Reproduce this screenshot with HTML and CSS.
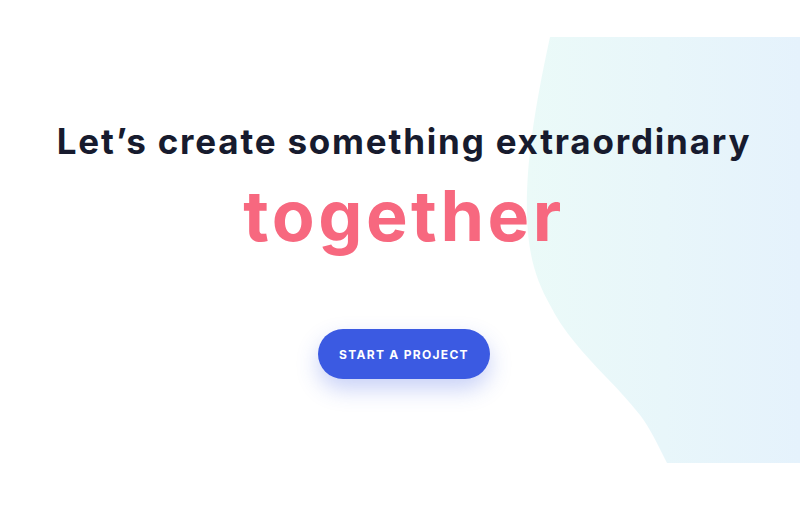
FILE: index.html
```html
<!DOCTYPE html>
<html lang="en">
<head>
<meta charset="utf-8">
<title>Let's create something extraordinary together</title>
<link rel="stylesheet" href="styles.css">
</head>
<body>
<section class="hero">
  <svg class="blob" width="800" height="510" viewBox="0 0 800 510" aria-hidden="true">
    <defs>
      <linearGradient id="bg" x1="0" y1="0" x2="1" y2="0">
        <stop offset="0" stop-color="#ebfaf8"/>
        <stop offset="1" stop-color="#e5f2fc"/>
      </linearGradient>
    </defs>
    <path d="M550 37 L800 37 L800 463 L667 463 C657 443 650 428 640 415 C628 400 615 386 605 376 C585 355 562 330 550 305 C536 280 528 255 527 215 C526 170 532 120 550 37 Z" fill="url(#bg)"/>
  </svg>
  <div class="content">
    <h1 class="title">Let’s create something extraordinary</h1>
    <p class="accent">together</p>
    <a class="cta" href="#">START A PROJECT</a>
  </div>
</section>
</body>
</html>
```
FILE: styles.css
```css
html, body {
  margin: 0;
  padding: 0;
  background: #ffffff;
}
body {
  width: 800px;
  height: 510px;
  overflow: hidden;
  font-family: Inter, "Noto Sans", sans-serif;
}
.hero {
  position: relative;
  width: 800px;
  height: 510px;
}
.blob {
  position: absolute;
  left: 0;
  top: 0;
  z-index: 0;
}
.content {
  position: relative;
  z-index: 1;
  display: flex;
  flex-direction: column;
  align-items: center;
  padding-top: 119px;
  padding-left: 8px;
}
.title {
  margin: 0;
  font-size: 35px;
  line-height: 44px;
  font-weight: 700;
  color: #171b2e;
  letter-spacing: 1.8px;
  white-space: nowrap;
}
.accent {
  margin: 12px 0 0;
  font-size: 70px;
  line-height: 82px;
  font-weight: 700;
  color: #f7687f;
  letter-spacing: 3.5px;
}
.cta {
  margin-top: 72px;
  width: 172px;
  height: 50px;
  border-radius: 25px;
  background: #3b5ae2;
  color: #ffffff;
  display: flex;
  align-items: center;
  justify-content: center;
  font-size: 12px;
  font-weight: 700;
  letter-spacing: 1.3px;
  text-decoration: none;
  box-shadow: 0 10px 22px rgba(59, 90, 226, 0.28);
}
```
